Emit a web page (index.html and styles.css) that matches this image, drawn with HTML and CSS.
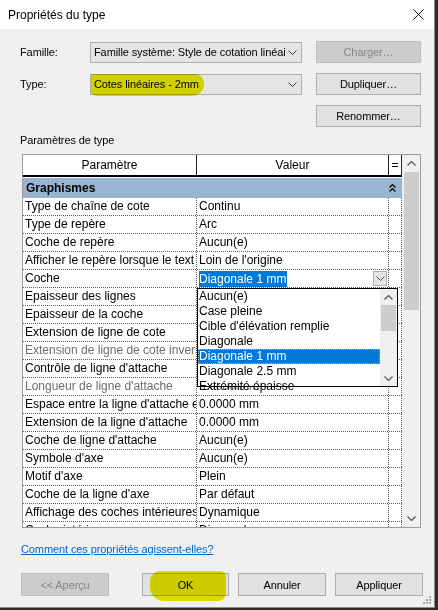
FILE: index.html
```html
<!DOCTYPE html>
<html lang="fr">
<head>
    <meta charset="UTF-8">
    <title>Propriétés du type</title>
    <link rel="stylesheet" href="styles.css">
</head>
<body>
    <div class="window">
        <div class="titlebar">
            <span>Propriétés du type</span>
            <svg class="close" width="11" height="11" viewBox="0 0 11 11"><path d="M0.5 0.5 L10.5 10.5 M10.5 0.5 L0.5 10.5" stroke="#111" stroke-width="1" fill="none"/></svg>
        </div>

        <div class="type-form">
            <label>Famille:</label>
            <div class="combo"><span class="combo-text">Famille système: Style de cotation linéai</span><svg class="chev" width="9" height="5" viewBox="0 0 9 5"><path d="M0.5 0.5 L4.5 4.5 L8.5 0.5" stroke="#333" fill="none"/></svg></div>
            <button class="btn" disabled>Charger…</button>

            <label>Type:</label>
            <div class="combo"><span class="combo-text">Cotes linéaires - 2mm</span><svg class="chev" width="9" height="5" viewBox="0 0 9 5"><path d="M0.5 0.5 L4.5 4.5 L8.5 0.5" stroke="#333" fill="none"/></svg></div>
            <button class="btn">Dupliquer…</button>

            <span></span>
            <span></span>
            <button class="btn">Renommer…</button>
        </div>

        <div class="section-label">Paramètres de type</div>

        <div class="grid-box">
            <div class="grid-main">
                <div class="grid-head">
                    <div>Paramètre</div>
                    <div>Valeur</div>
                    <div>=</div>
                </div>
                <div class="group-row">
                    <div>Graphismes</div>
                    <svg width="7" height="8" viewBox="0 0 7 8"><path d="M0.5 3.5 L3.5 0.5 L6.5 3.5 M0.5 7.5 L3.5 4.5 L6.5 7.5" stroke="#000" stroke-width="1.2" fill="none"/></svg>
                </div>
                <div class="row"><div>Type de chaîne de cote</div><div>Continu</div><div></div></div>
                <div class="row"><div>Type de repère</div><div>Arc</div><div></div></div>
                <div class="row"><div>Coche de repère</div><div>Aucun(e)</div><div></div></div>
                <div class="row"><div>Afficher le repère lorsque le text</div><div>Loin de l'origine</div><div></div></div>
                <div class="row">
                    <div>Coche</div>
                    <div class="edit-cell"><span class="sel">Diagonale 1 mm</span><span class="drop-btn"><svg width="9" height="5" viewBox="0 0 9 5"><path d="M0.5 0.5 L4.5 4.5 L8.5 0.5" stroke="#555" fill="none"/></svg></span></div>
                    <div></div>
                </div>
                <!-- values of these rows sit under the open list -->
                <div class="row"><div>Epaisseur des lignes</div><div></div><div></div></div>
                <div class="row"><div>Epaisseur de la coche</div><div></div><div></div></div>
                <div class="row"><div>Extension de ligne de cote</div><div></div><div></div></div>
                <div class="row muted"><div>Extension de ligne de cote invers</div><div></div><div></div></div>
                <div class="row"><div>Contrôle de ligne d'attache</div><div></div><div></div></div>
                <div class="row muted"><div>Longueur de ligne d'attache</div><div>5.0000 mm</div><div></div></div>
                <div class="row"><div>Espace entre la ligne d'attache et</div><div>0.0000 mm</div><div></div></div>
                <div class="row"><div>Extension de la ligne d'attache</div><div>0.0000 mm</div><div></div></div>
                <div class="row"><div>Coche de ligne d'attache</div><div>Aucun(e)</div><div></div></div>
                <div class="row"><div>Symbole d'axe</div><div>Aucun(e)</div><div></div></div>
                <div class="row"><div>Motif d'axe</div><div>Plein</div><div></div></div>
                <div class="row"><div>Coche de la ligne d'axe</div><div>Par défaut</div><div></div></div>
                <div class="row"><div>Affichage des coches intérieures</div><div>Dynamique</div><div></div></div>
                <div class="row"><div>Coche intérieure</div><div>Diagonale</div><div></div></div>
            </div>
            <div class="vscroll">
                <div class="arrow"><svg width="9" height="5" viewBox="0 0 9 5"><path d="M0.5 4.5 L4.5 0.5 L8.5 4.5" stroke="#606060" stroke-width="1.4" fill="none"/></svg></div>
                <div class="thumb main-thumb"></div>
                <div class="track"></div>
                <div class="arrow"><svg width="9" height="5" viewBox="0 0 9 5"><path d="M0.5 0.5 L4.5 4.5 L8.5 0.5" stroke="#606060" stroke-width="1.4" fill="none"/></svg></div>
            </div>

            <div class="dropdown">
                <ul class="options">
                    <li>Aucun(e)</li>
                    <li>Case pleine</li>
                    <li>Cible d'élévation remplie</li>
                    <li>Diagonale</li>
                    <li class="active">Diagonale 1 mm</li>
                    <li>Diagonale 2.5 mm</li>
                    <li>Extrémité épaisse</li>
                </ul>
                <div class="vscroll small">
                    <div class="arrow"><svg width="9" height="5" viewBox="0 0 9 5"><path d="M0.5 4.5 L4.5 0.5 L8.5 4.5" stroke="#606060" stroke-width="1.4" fill="none"/></svg></div>
                    <div class="thumb list-thumb"></div>
                    <div class="track"></div>
                    <div class="arrow"><svg width="9" height="5" viewBox="0 0 9 5"><path d="M0.5 0.5 L4.5 4.5 L8.5 0.5" stroke="#606060" stroke-width="1.4" fill="none"/></svg></div>
                </div>
            </div>
        </div>

        <a class="help-link" href="#">Comment ces propriétés agissent-elles?</a>

        <div class="footer">
            <button class="btn" disabled>&lt;&lt; Aperçu</button>
            <button class="btn ok">OK</button>
            <button class="btn">Annuler</button>
            <button class="btn">Appliquer</button>
        </div>

        <svg class="grip" width="8" height="8" viewBox="0 0 8 8" fill="#a8a8a8"><rect x="6" y="0" width="2" height="2"/><rect x="3" y="3" width="2" height="2"/><rect x="6" y="3" width="2" height="2"/><rect x="0" y="6" width="2" height="2"/><rect x="3" y="6" width="2" height="2"/><rect x="6" y="6" width="2" height="2"/></svg>

        <div class="marker marker-type"></div>
        <div class="marker marker-ok"></div>
    </div>
</body>
</html>
```

FILE: styles.css
```css
body { margin: 0; background: #2b2b2b; font-family: "Liberation Sans", Arial, sans-serif; font-size: 12px; color: #000; }
.window { position: relative; width: 435px; height: 608px; box-sizing: border-box; background: #f0f0f0; border-right: 1px solid #8c8c8c; border-bottom: 1px solid #8c8c8c; overflow: hidden; }

.titlebar { height: 29px; background: #fff; display: flex; align-items: center; justify-content: space-between; padding: 0 10px 0 8px; }
.titlebar span { padding-top: 1px; }

.type-form { display: grid; grid-template-columns: 56px 212px 105px; grid-auto-rows: 22px; column-gap: 14px; row-gap: 10px; margin: 12px 0 0 20px; align-items: center; font-size: 11px; letter-spacing: -0.1px; }
.type-form label { padding-bottom: 1px; }
.combo { height: 21px; box-sizing: border-box; border: 1px solid #adadad; background: #e5e5e5; display: flex; align-items: center; padding: 0 4px 0 3px; }
.combo-text { flex: 1; white-space: nowrap; overflow: hidden; }
.combo .chev { margin-left: 3px; flex: none; }

.btn { font-family: inherit; font-size: 11px; letter-spacing: -0.1px; color: #000; height: 22px; background: #e1e1e1; border: 1px solid #adadad; padding: 0; }
.btn:disabled { background: #cccccc; border-color: #bfbfbf; color: #838383; }

.section-label { margin: 6px 0 0 20px; line-height: 14px; font-size: 11px; letter-spacing: -0.1px; }

.grid-box { position: relative; margin: 7px 0 0 22px; width: 399px; height: 374px; box-sizing: border-box; border: 1px solid #9b9b9b; display: flex; overflow: hidden; background: #f0f0f0; }
.grid-main { width: 379px; background: #fff; margin-right: 1px; overflow: hidden; }

.grid-head, .row { display: grid; grid-template-columns: 174px 192px 13px; }
.grid-head { height: 22px; box-sizing: border-box; border-bottom: 2px solid #000; margin-bottom: 1px; }
.grid-head div { border-right: 1px solid #222; text-align: center; line-height: 20px; }

.group-row { height: 20px; background: #99b4d1; display: flex; align-items: center; justify-content: space-between; padding: 0 6px 0 3px; font-weight: bold; }

.row { height: 18px; box-sizing: border-box; border-bottom: 1px dotted #5f5f5f; }
.row div { border-right: 1px dotted #5f5f5f; padding-left: 2px; line-height: 17px; white-space: nowrap; overflow: hidden; }
.row.muted div { color: #6d6d6d; }

.edit-cell { display: flex; align-items: center; }
.sel { background: #0078d7; color: #fff; line-height: 16px; padding-right: 1px; }
.drop-btn { margin-left: auto; margin-right: 1px; width: 14px; height: 15px; box-sizing: border-box; border: 1px solid #adadad; background: #e5e5e5; display: flex; align-items: center; justify-content: center; }

.vscroll { width: 17px; display: flex; flex-direction: column; background: #f0f0f0; }
.vscroll .arrow { height: 17px; display: flex; align-items: center; justify-content: center; flex: none; }
.vscroll .thumb { background: #cdcdcd; margin: 0 1px; flex: none; }
.vscroll .track { flex: 1; }
.main-thumb { height: 138px; }

.dropdown { position: absolute; left: 174px; top: 133px; width: 201px; height: 99px; box-sizing: border-box; border: 1px solid #000; background: #fff; display: flex; }
.options { list-style: none; margin: 0; padding: 0; flex: 1; }
.options li { height: 15px; line-height: 15px; padding-left: 1px; white-space: nowrap; overflow: hidden; }
.options li.active { background: #0078d7; color: #fff; outline: 1px dotted #e8a35a; outline-offset: -1px; }
.vscroll.small .arrow { height: 16px; }
.list-thumb { height: 26px; }

.help-link { display: block; margin: 14px 0 0 21px; width: max-content; color: #0066cc; line-height: 14px; font-size: 11px; letter-spacing: -0.1px; }

.footer { display: flex; margin: 17px 0 0 21px; }
.footer .btn { width: 88px; height: 23px; margin-right: 9px; }
.footer .btn.ok { margin-left: 24px; width: 87px; }

.grip { position: absolute; right: 3px; bottom: 3px; }

.marker { position: absolute; background: #e8e800; mix-blend-mode: multiply; }
.marker-type { left: 91px; top: 74px; width: 113px; height: 22px; border-radius: 2px 9px 12px 5px; }
.marker-ok { left: 150px; top: 571px; width: 76px; height: 30px; border-radius: 10px 6px 8px 14px; }
```
